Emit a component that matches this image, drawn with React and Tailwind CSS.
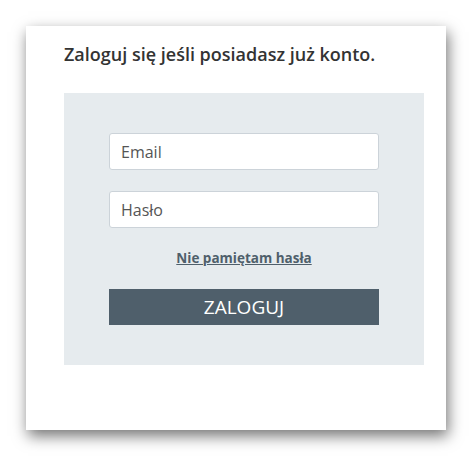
import React from "react";

const App = () => {
  return (
    <div
      className="min-h-screen bg-white p-[26px]"
      style={{ fontFamily: "'Open Sans', Lato, sans-serif" }}
    >
      <div className="w-[420px] h-[404px] bg-white shadow-[2px_6px_14px_rgba(0,0,0,0.55)] pl-[38px] pr-[22px] pt-[16px]">
        <h2 className="text-[18px] leading-[25px] font-semibold text-[#333]">
          Zaloguj się jeśli posiadasz już konto.
        </h2>
        <div className="mt-[26px] bg-[#e6ebee] px-[45px] pt-[40px] pb-[40px]">
          <input
            type="text"
            placeholder="Email"
            className="block w-full h-[37px] bg-white border border-[#ccd3d9] rounded-[3px] px-[11px] text-[16px] placeholder:text-[#555] outline-none"
          />
          <input
            type="password"
            placeholder="Hasło"
            className="block w-full h-[37px] mt-[21px] bg-white border border-[#ccd3d9] rounded-[3px] px-[11px] text-[16px] placeholder:text-[#555] outline-none"
          />
          <div className="h-[61px] flex items-center justify-center">
            <a href="#" className="text-[13.5px] font-bold text-[#4f5f6b] underline">
              Nie pamiętam hasła
            </a>
          </div>
          <button className="block w-full h-[36px] bg-[#4f5f6b] text-white text-[19px]">
            ZALOGUJ
          </button>
        </div>
      </div>
    </div>
  );
};

export default App;
